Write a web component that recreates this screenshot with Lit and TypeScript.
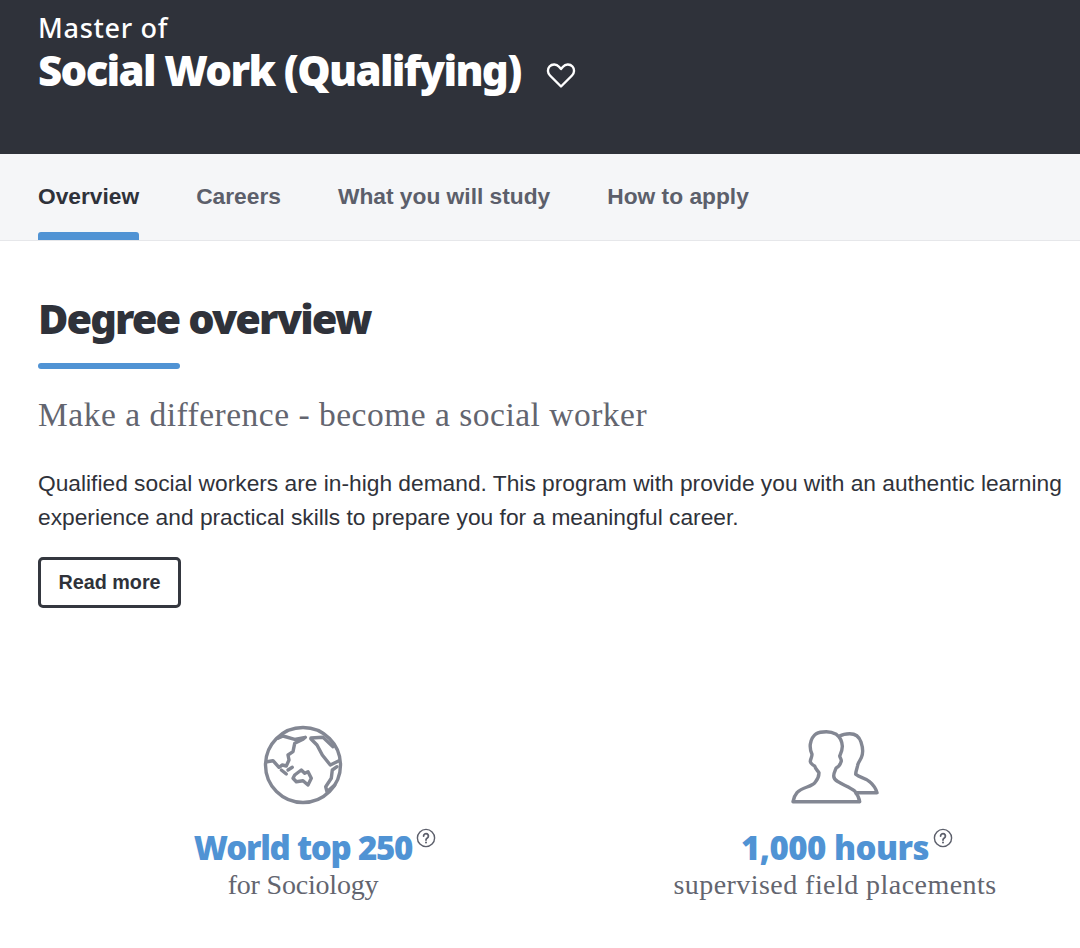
import { LitElement, html, css } from "lit";
import { customElement } from "lit/decorators.js";

const TABS = ["Overview", "Careers", "What you will study", "How to apply"];

@customElement("app-root")
export class AppRoot extends LitElement {
  static styles = css`
    :host {
      display: block;
      height: 948px;
      overflow: hidden;
      background: #fff;
      font-family: "Liberation Sans", Arial, sans-serif;
      color: #2f323a;
    }

    .hero {
      height: 154px;
      box-sizing: border-box;
      padding: 11px 38px 0;
      background: #2f323a;
      color: #fff;
    }

    .eyebrow {
      font-family: "Noto Sans", sans-serif;
      font-size: 27px;
      line-height: 34px;
      font-weight: 500;
      letter-spacing: 0.7px;
    }

    .title-row {
      display: flex;
      align-items: center;
      gap: 25px;
    }

    h1 {
      margin: 0;
      font-family: "Noto Sans", sans-serif;
      font-size: 42px;
      line-height: 50px;
      font-weight: 900;
      letter-spacing: -1.67px;
      white-space: nowrap;
    }

    .heart {
      display: block;
      width: 30px;
      height: 28px;
      margin-top: 9px;
    }

    .tabs {
      display: flex;
      gap: 57px;
      height: 87px;
      box-sizing: border-box;
      padding: 0 38px;
      background: #f5f6f8;
      border-bottom: 1px solid #e6e7ea;
    }

    .tab {
      position: relative;
      height: 86px;
      font-size: 22.75px;
      line-height: 84px;
      font-weight: 700;
      color: #5c5f6b;
      white-space: nowrap;
    }

    .tab.active {
      color: #2f323a;
    }

    .tab.active::after {
      content: "";
      position: absolute;
      left: 0;
      right: 0;
      bottom: 0;
      height: 8px;
      border-radius: 3px 3px 0 0;
      background: #5093d4;
    }

    .content {
      padding: 0 0 0 38px;
    }

    h2 {
      margin: 0;
      padding-top: 50px;
      font-family: "Noto Sans", sans-serif;
      font-size: 41.5px;
      line-height: 54px;
      font-weight: 900;
      letter-spacing: -1.9px;
      white-space: nowrap;
    }

    .rule {
      width: 142px;
      height: 6px;
      margin-top: 18px;
      border-radius: 3px;
      background: #5093d4;
    }

    .lede {
      margin: 25px 0 0;
      font-family: "Liberation Serif", serif;
      font-size: 33.5px;
      line-height: 42px;
      letter-spacing: 0.5px;
      color: #63656f;
    }

    .body {
      margin: 30px 0 0;
      font-size: 22.75px;
      line-height: 34px;
      color: #2f323a;
      white-space: nowrap;
    }

    .btn {
      display: block;
      box-sizing: border-box;
      width: 143px;
      height: 51px;
      margin-top: 23px;
      padding: 0;
      border: 3px solid #34373f;
      border-radius: 5px;
      background: #fff;
      font-family: inherit;
      font-size: 19.8px;
      font-weight: 700;
      color: #2f323a;
    }

    .stats {
      display: grid;
      grid-template-columns: 532px 532px;
      padding-left: 37px;
      margin-top: 117px;
    }

    .stat {
      display: flex;
      flex-direction: column;
      align-items: center;
    }

    .icon {
      display: block;
      height: 80px;
      overflow: visible;
    }

    .globe {
      width: 80px;
    }

    .people {
      width: 86px;
    }

    .stat-head {
      position: relative;
      margin-top: 21px;
      height: 44px;
      color: #5093d4;
    }

    .stat-value {
      font-family: "Noto Sans", sans-serif;
      font-size: 33px;
      line-height: 44px;
      font-weight: 900;
      letter-spacing: -1.25px;
      white-space: nowrap;
    }

    .stat-value.num {
      letter-spacing: -0.55px;
    }

    .help {
      position: absolute;
      top: 2px;
      right: -24px;
      display: block;
      width: 20px;
      height: 20px;
    }

    .stat-label {
      font-family: "Liberation Serif", serif;
      font-size: 28px;
      line-height: 32px;
      margin-top: -1px;
      color: #63656f;
      white-space: nowrap;
    }

    .stat-label.narrow {
      letter-spacing: -0.2px;
    }

    .stat-label.wide {
      letter-spacing: 0.45px;
    }
  `;

  private helpIcon() {
    return html`<svg class="help" viewBox="0 0 20 20" fill="none" stroke="#5c5f6b">
      <circle cx="10" cy="10" r="8.6" stroke-width="1.4"></circle>
      <path d="M7.6 8a2.4 2.4 0 1 1 3.7 2c-.9.6-1.3 1-1.3 2" stroke-width="1.8" stroke-linecap="round"></path>
      <circle cx="10" cy="14.6" r="1" fill="#5c5f6b" stroke="none"></circle>
    </svg>`;
  }

  private globe() {
    return html`<svg class="icon globe" viewBox="0 0 80 80" fill="none" stroke="#838793" stroke-width="3.4" stroke-linejoin="round" stroke-linecap="round">
      <circle cx="40" cy="40" r="37.5"></circle>
      <path d="M4 36.7 10 35.7 16 42.3 19.3 40 23.3 41 26 35 25 30 30 26.7 31.7 18.3 40 14.3 42.3 12.3 31.7 14.3 20 11 15 13.3"></path>
      <path d="M48 14 54 20 59.3 30 67.3 40 76 35.7"></path>
      <path d="M48 13 60 12.3 70 21.7"></path>
      <path d="M74 41.7 69.3 45 68.3 53.3 62.7 61.7 64 66.7 71.7 60"></path>
      <path d="M31.7 50 38.3 45 41.7 48.3 45 46.7 48.3 53.3 45 60 40 55.7 33.3 56.7 30 53.3Z"></path>
      <path d="M18.3 45 23.3 49M25 45 29.3 42.3"></path>
    </svg>`;
  }

  private people() {
    return html`<svg class="icon people" viewBox="0 -6 86 80" fill="none" stroke="#838793" stroke-width="3.4" stroke-linejoin="round">
      <path d="M47.7 5C51 3 54 2.7 57.7 2.7 63 2.7 67 5 69 11 71 17 71.5 22 69.3 26.7 68 30 66 31 65.5 35 65 38 63.7 40 63.7 43.3 68 47 74 47 78 51 81.5 54 84 58 85 61.7H62.7"></path>
      <path d="M1 70.7C2 66 3 64 5 61.7 10 56 20 56 23 51.5 26 48 27 45 27 41.7 25 39 23 37 22.7 35 20 34 18 31 18.3 30 19 27 20 26 20 23.3 18 19 18 16 18.3 13.3 19 8 21 5 24.3 2.7 27 1 31 .7 34.3 .7 38 .7 41 1.5 44.3 3.3 48 6 50 10 50.3 15 50.5 19 49 22 47.7 25 48 27 49.5 28 49.3 30 48.5 33 46 36 44.3 36.7 43 40 41.7 42 41.7 45 41.7 47 43 49 46 50.7 51 54 58 56 62.7 60 65 63 67 66 67.7 70.7Z"></path>
    </svg>`;
  }

  render() {
    return html`
      <header class="hero">
        <div class="eyebrow">Master of</div>
        <div class="title-row">
          <h1>Social Work (Qualifying)</h1>
          <svg class="heart" viewBox="0 0 30 28" fill="none" stroke="#fff" stroke-width="2.4" stroke-linejoin="round">
            <path d="M15 25.5 4 14.5C1.5 12 1.2 8 3.5 5.5c2.6-2.8 7-2.6 9.5.2l2 2.3 2-2.3c2.5-2.8 6.900-3 9.500-.2 2.300 2.500 2 6.500-.5 9z"></path>
          </svg>
        </div>
      </header>
      <nav class="tabs">
        ${TABS.map((t, i) => html`<div class="tab ${i === 0 ? "active" : ""}">${t}</div>`)}
      </nav>
      <main class="content">
        <h2>Degree overview</h2>
        <div class="rule"></div>
        <p class="lede">Make a difference - become a social worker</p>
        <p class="body">
          Qualified social workers are in-high demand. This program with provide you with an authentic learning<br />
          experience and practical skills to prepare you for a meaningful career.
        </p>
        <button class="btn">Read more</button>
      </main>
      <section class="stats">
        <div class="stat">
          ${this.globe()}
          <div class="stat-head"><span class="stat-value">World top 250</span>${this.helpIcon()}</div>
          <div class="stat-label narrow">for Sociology</div>
        </div>
        <div class="stat">
          ${this.people()}
          <div class="stat-head"><span class="stat-value num">1,000 hours</span>${this.helpIcon()}</div>
          <div class="stat-label wide">supervised field placements</div>
        </div>
      </section>
    `;
  }
}
